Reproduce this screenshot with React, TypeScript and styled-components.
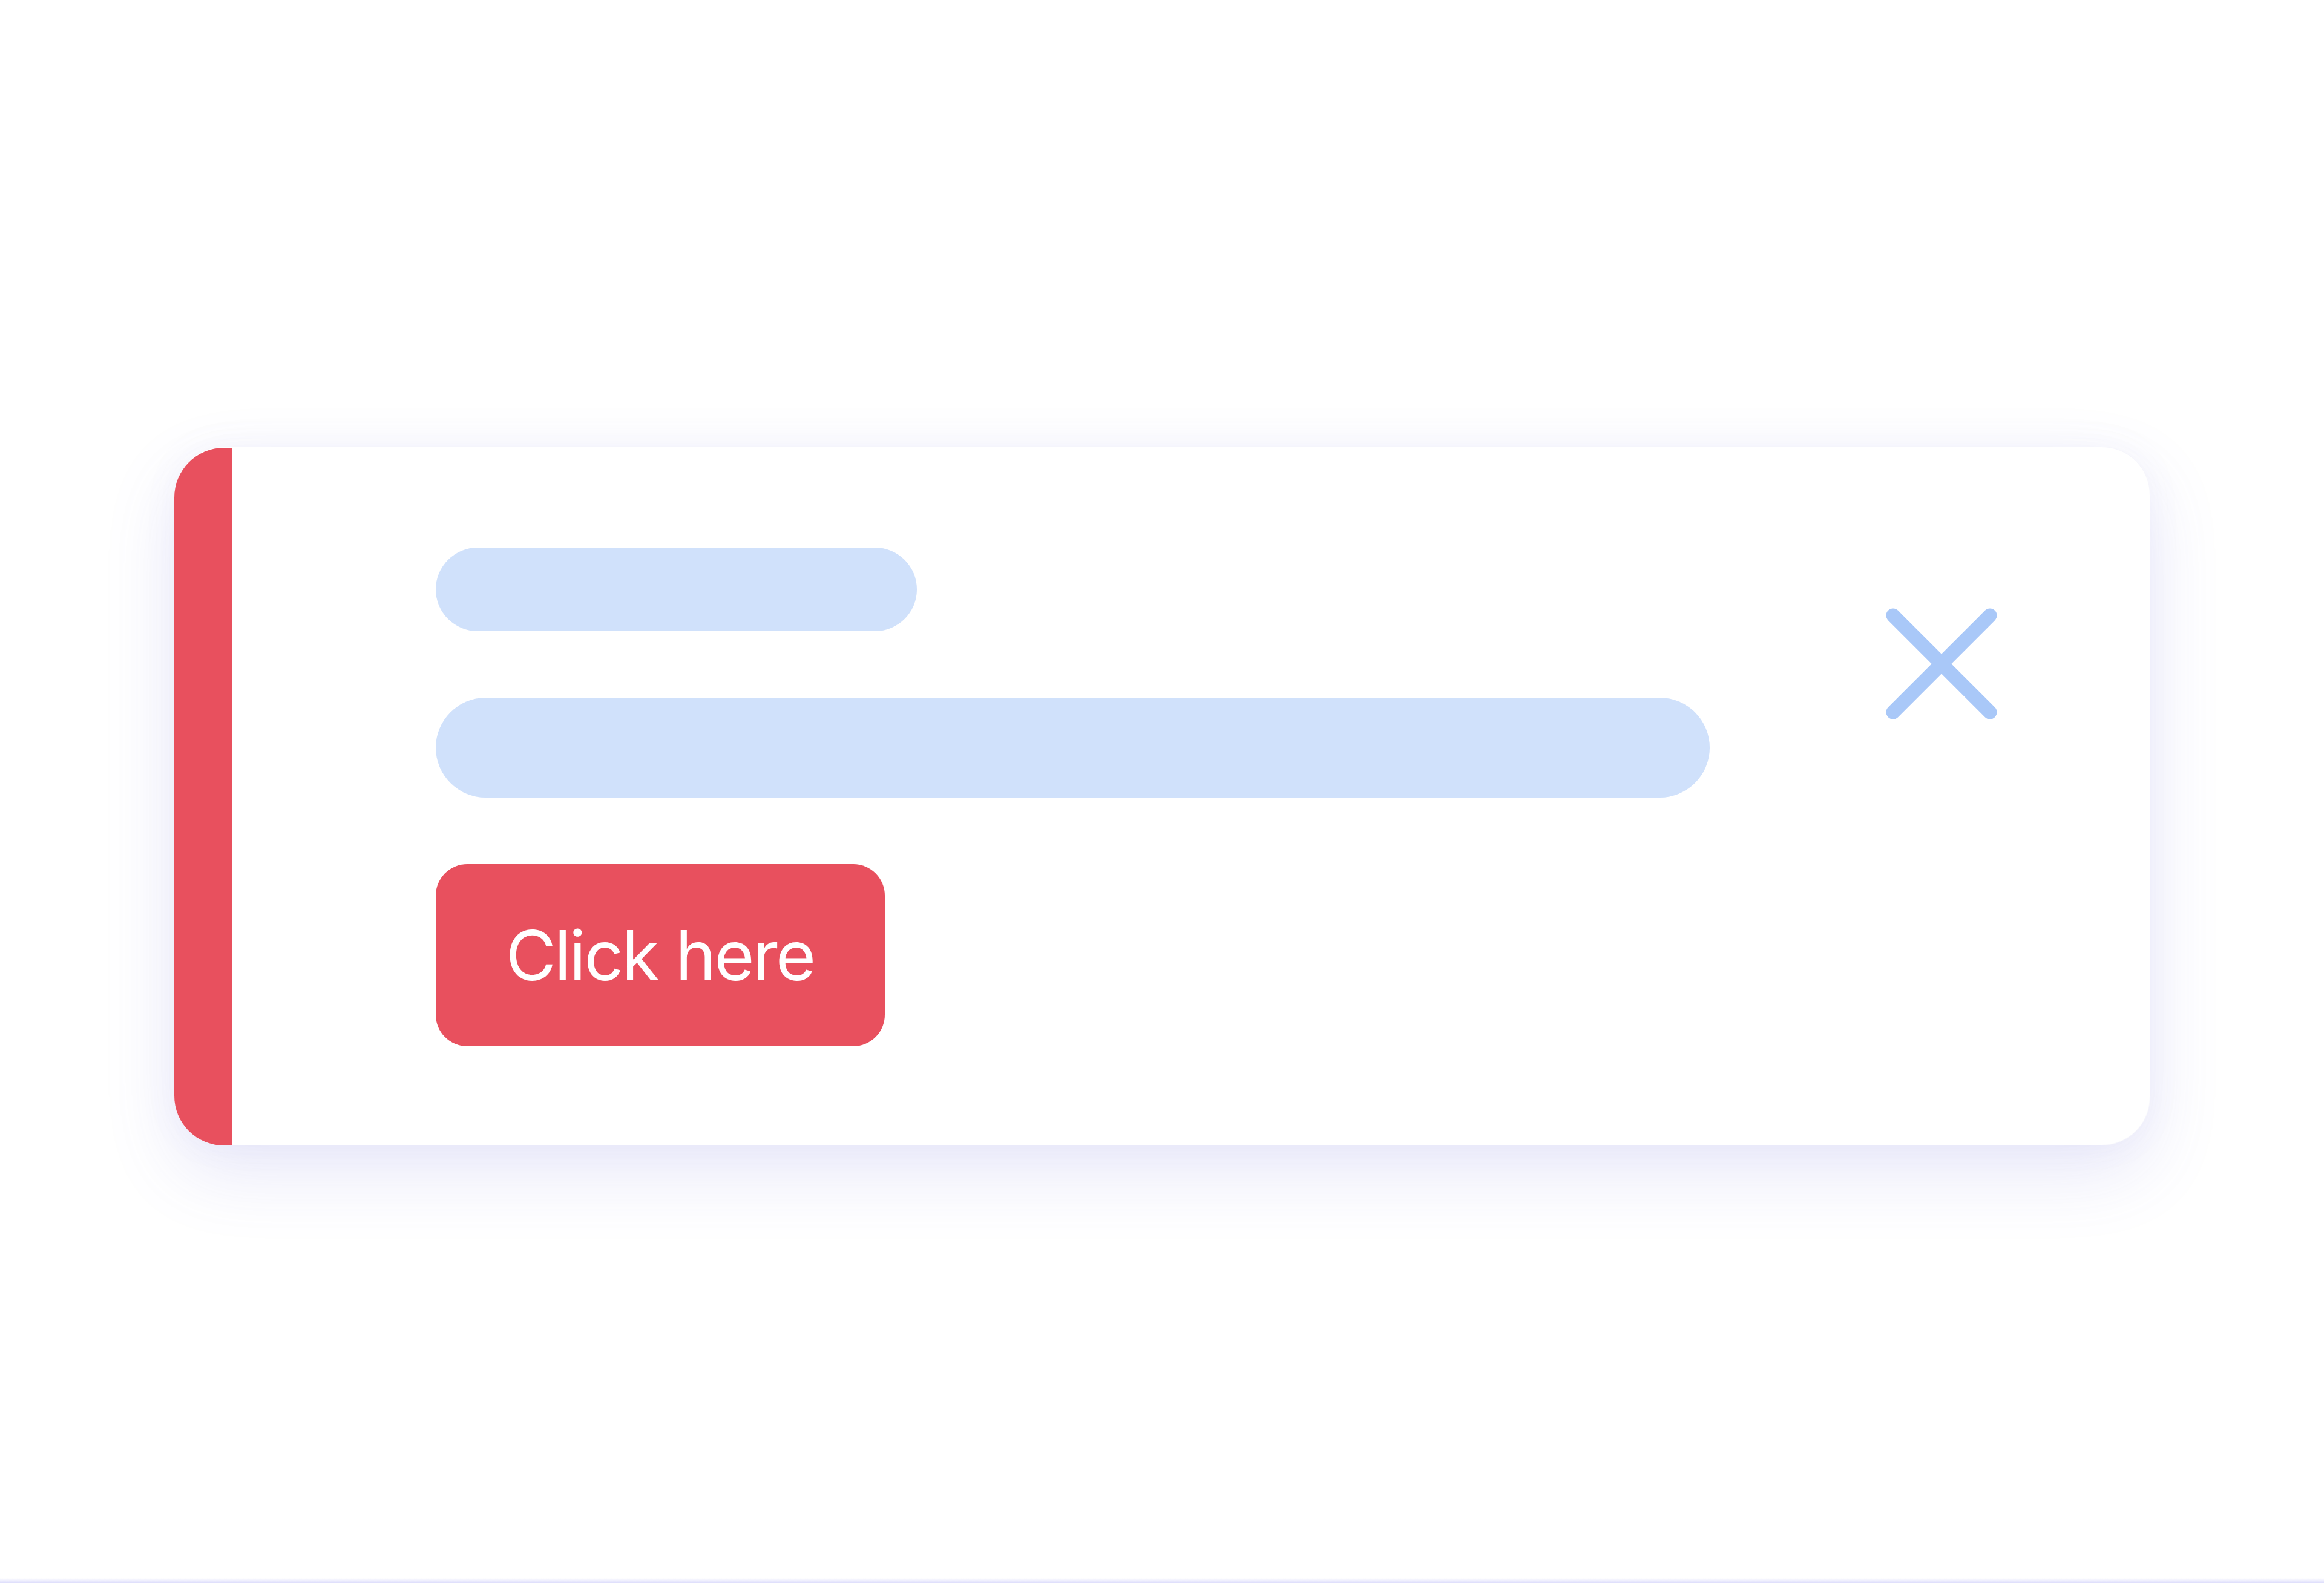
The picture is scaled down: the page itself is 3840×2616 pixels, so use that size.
import React from "react";
import styled, { createGlobalStyle } from "styled-components";

const GlobalStyle = createGlobalStyle`
  html, body {
    margin: 0;
    padding: 0;
    background: #ffffff;
    font-family: Inter, "Noto Sans", "Liberation Sans", sans-serif;
  }
  * { box-sizing: border-box; }
`;

const Page = styled.main`
  min-height: 100vh;
  display: flex;
  flex-direction: column;
  align-items: center;
  padding-top: 738px;
`;

const Card = styled.section`
  width: 3265px;
  height: 1155px;
  display: flex;
  align-items: stretch;
  background: #ffffff;
  border-radius: 80px;
  border: 1px solid #f6f6fc;
  box-shadow: 0 45px 120px rgba(90, 90, 215, 0.14), 0 0 60px rgba(110, 110, 210, 0.05);
`;

const Accent = styled.div`
  flex: 0 0 96px;
  margin: 1px 0 -1px -1px;
  background: #e8505e;
  border-radius: 82px 0 0 82px;
`;

const Body = styled.div`
  flex: 1;
  display: flex;
  flex-direction: column;
  align-items: flex-start;
  gap: 110px;
  padding: 166px 0 0 336px;
`;

const Pill = styled.div<{ $w: number; $h: number }>`
  width: ${(p) => p.$w}px;
  height: ${(p) => p.$h}px;
  border-radius: ${(p) => p.$h / 2}px;
  background: #d0e1fb;
`;

const ActionButton = styled.button`
  width: 742px;
  height: 301px;
  border: none;
  border-radius: 52px;
  background: #e8505e;
  color: #ffffff;
  font-family: Inter, "Noto Sans", "Liberation Sans", sans-serif;
  font-size: 114px;
  font-weight: 400;
  letter-spacing: -3px;
  line-height: 1;
  display: flex;
  align-items: center;
  justify-content: center;
  padding: 0;
  cursor: pointer;
`;

const CloseButton = styled.button`
  width: 200px;
  height: 200px;
  margin: 258px 244px 0 0;
  border: none;
  background: transparent;
  padding: 0;
  display: flex;
  cursor: pointer;
`;

const BottomEdge = styled.div`
  margin-top: auto;
  width: 100%;
  height: 8px;
  background: linear-gradient(to bottom, rgba(225, 225, 252, 0), rgba(222, 222, 252, 1));
`;

export default function App() {
  return (
    <>
      <GlobalStyle />
      <Page>
        <Card>
          <Accent />
          <Body>
            <Pill $w={795} $h={138} />
            <Pill $w={2105} $h={165} />
            <ActionButton>Click here</ActionButton>
          </Body>
          <CloseButton aria-label="Close">
            <svg width="200" height="200" viewBox="0 0 200 200">
              <path
                d="M20 20 L180 180 M180 20 L20 180"
                stroke="#a9c8f8"
                strokeWidth="23"
                strokeLinecap="round"
                fill="none"
              />
            </svg>
          </CloseButton>
        </Card>
        <BottomEdge />
      </Page>
    </>
  );
}
